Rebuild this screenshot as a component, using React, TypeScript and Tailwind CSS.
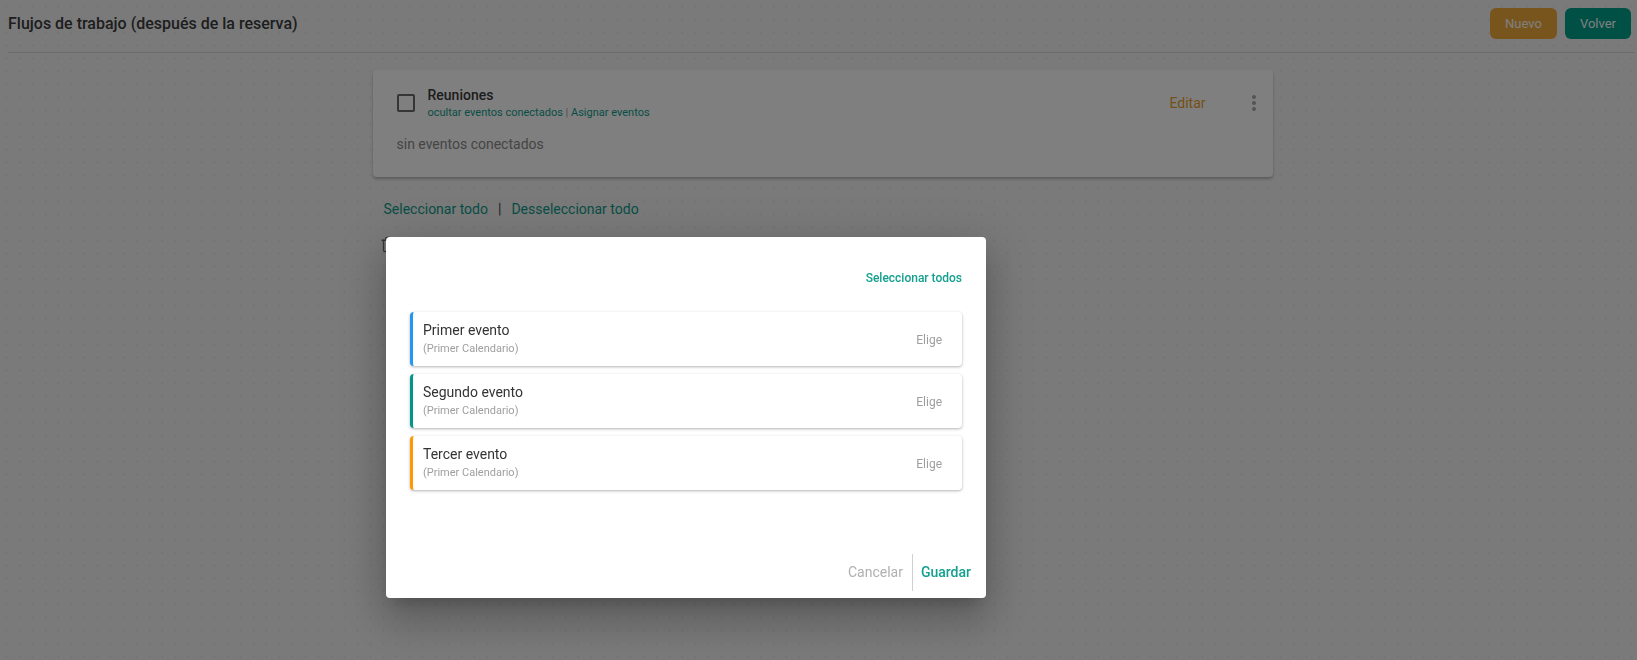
import React from "react";
import { Trash2 } from "lucide-react";

const events = [
  { title: "Primer evento", cal: "(Primer Calendario)", border: "border-l-[#2196f3]" },
  { title: "Segundo evento", cal: "(Primer Calendario)", border: "border-l-[#009688]" },
  { title: "Tercer evento", cal: "(Primer Calendario)", border: "border-l-[#ff9800]" },
];

export default function App() {
  return (
    <div
      className="relative min-h-[660px] w-full overflow-hidden bg-[#f4f4f4] bg-[radial-gradient(circle,#e6e6e6_0.8px,transparent_1.2px)] bg-[length:13px_13px] text-[#444]"
      style={{ fontFamily: "Roboto, 'Noto Sans', Arial, sans-serif" }}
    >
      {/* Header */}
      <div className="pl-2 pr-[2px]">
        <div className="flex h-[47px] items-center justify-between pr-1">
          <h1 className="text-[16px] font-medium leading-6 text-[#3c3c3c]">
            Flujos de trabajo (después de la reserva)
          </h1>
          <div className="flex items-center gap-2">
            <button className="h-[31px] w-[67px] rounded-[6px] bg-[#f2aa3c] text-[13px] text-white">
              Nuevo
            </button>
            <button className="h-[31px] w-[66px] rounded-[6px] bg-[#00a08c] text-[13px] text-white">
              Volver
            </button>
          </div>
        </div>
        <div className="mt-[5px] h-px bg-[#d6d6d6]" />
      </div>

      {/* Content */}
      <div className="pl-2">
        <div className="mx-auto w-[900px]">
          <div className="mt-[17px] rounded-[4px] bg-white pb-[23px] pl-6 pr-[7px] pt-[15px] shadow-[0_2px_3px_rgba(0,0,0,0.25)]">
            <div className="flex items-center">
              <div className="mr-[13px] h-[18px] w-[18px] rounded-[2px] border-2 border-[#6a6a6a]" />
              <div className="flex flex-col">
                <span className="text-[14px] font-medium leading-5 text-[#3a3a3a]">Reuniones</span>
                <span className="text-[11px] leading-4 text-[#0f9c8b]">
                  ocultar eventos conectados <span className="text-[#999]">|</span> Asignar eventos
                </span>
              </div>
              <span className="ml-auto text-[14px] leading-5 text-[#eaa02e]">Editar</span>
              <div className="ml-[36px] flex h-6 w-6 items-center justify-center">
                <svg width="24" height="24" viewBox="0 0 24 24" fill="#a8a8a8">
                  <circle cx="12" cy="6" r="2" />
                  <circle cx="12" cy="12" r="2" />
                  <circle cx="12" cy="18" r="2" />
                </svg>
              </div>
            </div>
            <div className="mt-[13px] text-[14px] leading-5 text-[#8a8a8a]">sin eventos conectados</div>
          </div>

          <div className="ml-[11px] mt-[22px] flex items-center text-[14px] leading-5 text-[#0f9c8b]">
            <span>Seleccionar todo</span>
            <span className="mx-[10px] text-[#444]">|</span>
            <span>Desseleccionar todo</span>
          </div>

          <div className="ml-[7px] mt-[17px] flex items-center text-[#6a6a6a]">
            <Trash2 size={17} strokeWidth={2} />
          </div>
        </div>
      </div>

      {/* Overlay */}
      <div className="fixed inset-0 bg-black/50" />

      {/* Modal */}
      <div className="absolute left-[386px] top-[237px] flex h-[361px] w-[600px] flex-col rounded-[4px] bg-white shadow-[0_11px_15px_-7px_rgba(0,0,0,0.2),0_24px_38px_3px_rgba(0,0,0,0.14),0_9px_46px_8px_rgba(0,0,0,0.12)]">
        <div className="px-6 pt-[33px]">
          <div className="text-right text-[12px] font-medium leading-4 text-[#13a08f]">Seleccionar todos</div>
          <div className="mt-[26px] flex flex-col gap-2">
            {events.map((e) => (
              <div
                key={e.title}
                className={`flex h-[54px] items-start rounded-[4px] border-l-[3px] ${e.border} bg-white pl-[10px] pr-5 pt-[8px] shadow-[0_1px_3px_rgba(0,0,0,0.3)]`}
              >
                <div className="flex flex-col">
                  <span className="text-[14px] leading-5 text-[#333]">{e.title}</span>
                  <span className="mt-[2px] text-[11px] leading-[14px] text-[#9e9e9e]">{e.cal}</span>
                </div>
                <span className="ml-auto mt-[12px] text-[12px] leading-4 text-[#9e9e9e]">Elige</span>
              </div>
            ))}
          </div>
        </div>
        <div className="mt-auto flex items-center justify-end pb-[7px] pr-[15px]">
          <span className="mr-[9px] text-[14px] text-[#b0b0b0]">Cancelar</span>
          <div className="h-[37px] w-px bg-[#d0d0d0]" />
          <span className="ml-[8px] text-[14px] font-medium text-[#13a08f]">Guardar</span>
        </div>
      </div>
    </div>
  );
}
